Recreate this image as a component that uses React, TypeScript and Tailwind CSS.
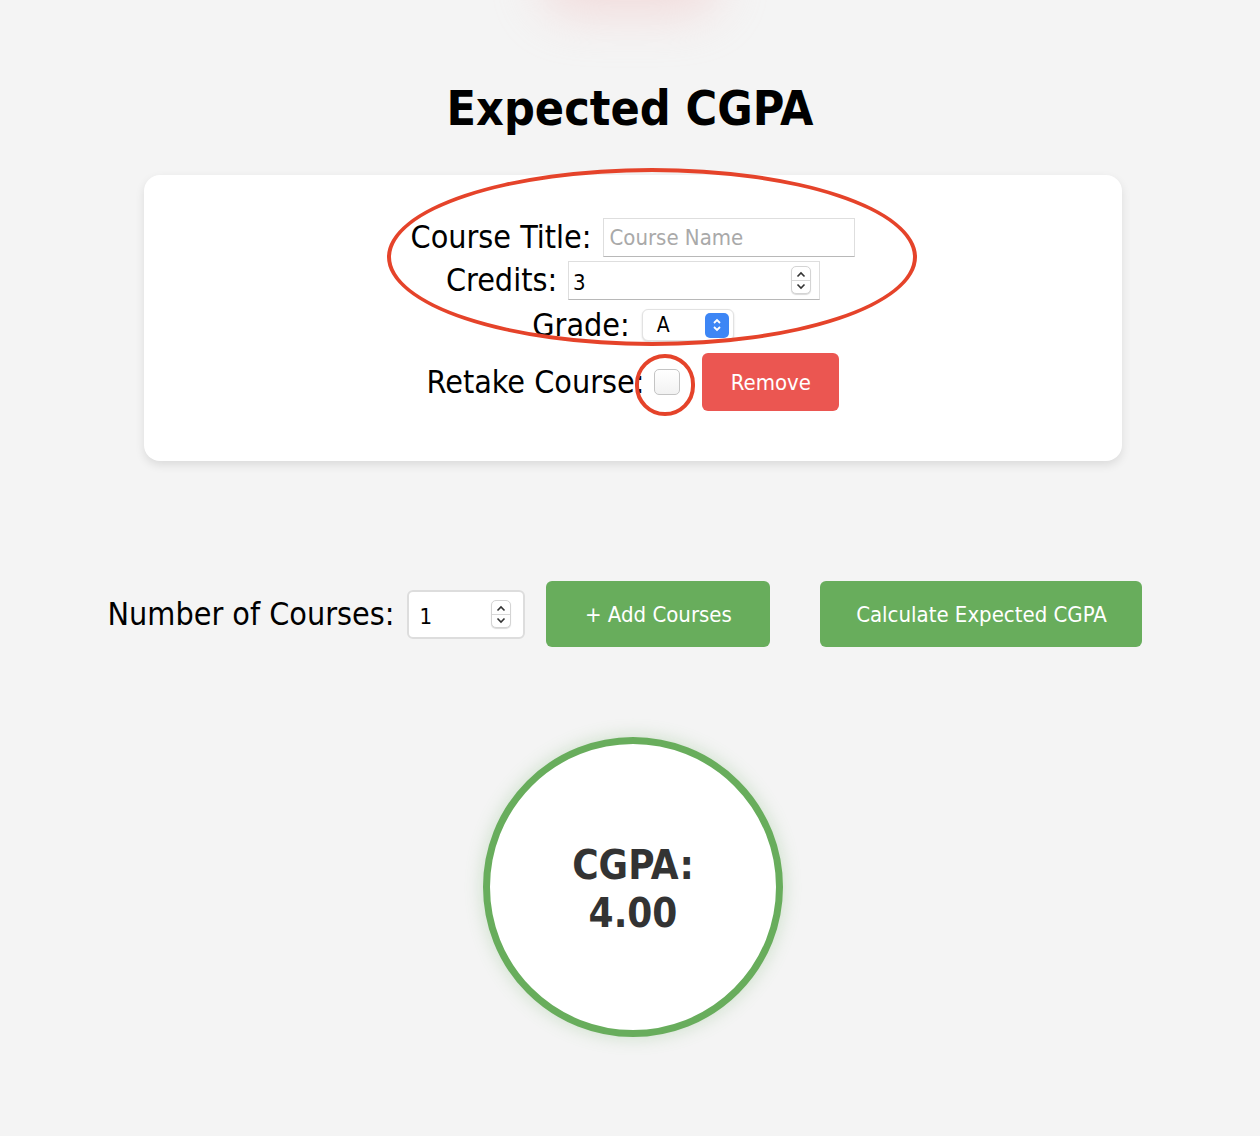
import React from "react";

const font = "font-['DejaVu_Sans_Condensed','DejaVu_Sans',sans-serif]";

function Spinner() {
  return (
    <span className="flex h-[28px] w-[20px] flex-col items-center justify-center rounded-[5px] border border-[#d4d4d4] bg-white shadow-[0_1px_1px_rgba(0,0,0,0.15)]">
      <svg width="10" height="7" viewBox="0 0 10 7" className="mb-[2px]">
        <path d="M1.5 5.5 5 2l3.5 3.5" fill="none" stroke="#333" strokeWidth="1.6" />
      </svg>
      <span className="h-px w-full bg-[#d8d8d8]" />
      <svg width="10" height="7" viewBox="0 0 10 7" className="mt-[2px]">
        <path d="M1.5 1.5 5 5l3.5-3.5" fill="none" stroke="#333" strokeWidth="1.6" />
      </svg>
    </span>
  );
}

export default function App() {
  return (
    <div className={`relative min-h-[1136px] overflow-hidden bg-[#f4f4f4] ${font}`}>
      <div className="absolute left-1/2 top-[-55px] h-[70px] w-[180px] -translate-x-1/2 rounded-full bg-[#f0c4c4] opacity-50 blur-[24px]" />

      <h1 className="pt-[77px] text-center text-[48px] font-bold leading-[62px] text-black">
        Expected CGPA
      </h1>

      <div className="relative ml-[144px] mt-[36px] w-[978px] rounded-[16px] bg-white pb-[45px] pt-[41px] shadow-[0_4px_10px_rgba(0,0,0,0.1)]">
        <div className="flex h-[42px] items-center justify-center">
          <span className="text-[32px] text-black">Course Title:</span>
          <div className="ml-[12px] flex h-[39px] w-[252px] items-center border border-[#dedede] border-b-[#b8b8b8] px-[5px] text-[22px] text-[#a9a9a9]">
            Course Name
          </div>
        </div>
        <div className="flex h-[44px] items-center justify-center">
          <span className="text-[32px] text-black">Credits:</span>
          <div className="ml-[11px] flex h-[39px] w-[252px] items-center justify-between border border-[#dedede] border-b-[#b8b8b8] pl-[4px] pr-[8px] pt-[4px] text-[22px] text-black">
            <span>3</span>
            <span className="-mt-[4px]">
              <Spinner />
            </span>
          </div>
        </div>
        <div className="flex h-[46px] items-center justify-center">
          <span className="text-[32px] text-black">Grade:</span>
          <div className="ml-[12px] flex h-[32px] w-[92px] items-center justify-between rounded-[6px] border border-[#e2e2e2] bg-white pl-[14px] pr-[4px] text-[21px] text-black shadow-[0_1px_2px_rgba(0,0,0,0.15)]">
            <span className="pt-[2px]">A</span>
            <span className="flex h-[25px] w-[24px] flex-col items-center justify-center rounded-[5px] bg-[#3d86f5]">
              <svg width="12" height="18" viewBox="0 0 12 18">
                <path d="M3 7l3-3 3 3M3 11l3 3 3-3" fill="none" stroke="#fff" strokeWidth="1.8" />
              </svg>
            </span>
          </div>
        </div>
        <div className="flex h-[68px] items-center justify-center">
          <span className="text-[32px] text-black">Retake Course:</span>
          <span className="ml-[10px] h-[26px] w-[26px] rounded-[5px] border border-[#c4c4c4] bg-gradient-to-b from-white to-[#f2f2f2]" />
          <button className="ml-[22px] h-[58px] w-[137px] rounded-[6px] bg-[#eb5651] text-[22px] text-white">
            Remove
          </button>
        </div>

        {/* annotation marks */}
        <div className="pointer-events-none absolute left-[243px] top-[-7px] h-[178px] w-[530px] rounded-[50%] border-[4px] border-[#e5432a]" />
        <div className="pointer-events-none absolute left-[491px] top-[179px] h-[62px] w-[60px] rounded-full border-[4px] border-[#e5432a]" />
      </div>

      <div className="mt-[120px] flex h-[66px] items-center justify-center pr-[10px]">
        <span className="text-[32px] text-black">Number of Courses:</span>
        <div className="ml-[13px] flex h-[49px] w-[118px] items-center justify-between rounded-[6px] border-2 border-[#dddddd] bg-white pl-[10px] pr-[12px] pt-[4px] text-[22px] text-black">
          <span>1</span>
          <span className="-mt-[4px]">
            <Spinner />
          </span>
        </div>
        <button className="ml-[21px] h-[66px] w-[224px] rounded-[6px] bg-[#68ad5c] text-[22px] text-white">
          + Add Courses
        </button>
        <button className="ml-[50px] h-[66px] w-[322px] rounded-[6px] bg-[#68ad5c] text-[22px] text-white">
          Calculate Expected CGPA
        </button>
      </div>

      <div className="mt-[90px] flex justify-center pl-[6px]">
        <div className="flex h-[300px] w-[300px] flex-col items-center justify-center rounded-full border-[7px] border-[#68ad5c] bg-white pt-[4px] text-[40px] font-bold leading-[48px] text-[#333] shadow-[0_0_18px_rgba(104,173,92,0.3)]">
          <span>CGPA:</span>
          <span>4.00</span>
        </div>
      </div>
    </div>
  );
}
